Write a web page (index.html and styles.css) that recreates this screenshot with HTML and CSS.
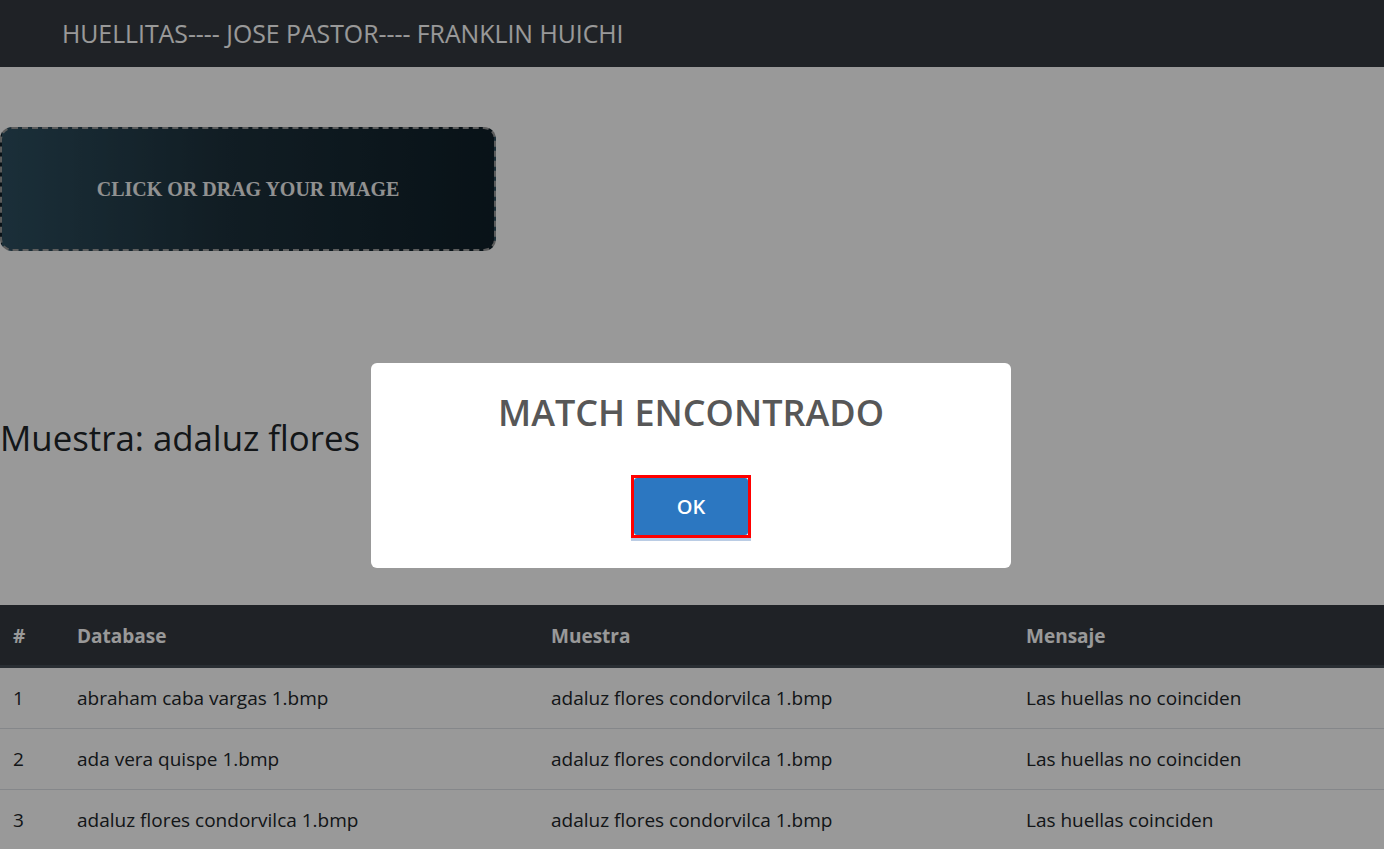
FILE: index.html
```html
<!DOCTYPE html>
<html lang="es">
<head>
<meta charset="utf-8">
<title>Huellitas</title>
<link rel="stylesheet" href="styles.css">
</head>
<body>
<nav class="navbar">
  <span class="brand">HUELLITAS---- JOSE PASTOR---- FRANKLIN HUICHI</span>
</nav>
<main class="content">
  <div class="dropzone">
    <span class="dropzone-text">CLICK OR DRAG YOUR IMAGE</span>
  </div>
  <h3 class="sample">Muestra: adaluz flores</h3>
  <table class="results">
    <thead>
      <tr>
        <th class="c-num">#</th>
        <th class="c-db">Database</th>
        <th class="c-sample">Muestra</th>
        <th class="c-msg">Mensaje</th>
      </tr>
    </thead>
    <tbody>
      <tr><td>1</td><td>abraham caba vargas 1.bmp</td><td>adaluz flores condorvilca 1.bmp</td><td>Las huellas no coinciden</td></tr>
      <tr><td>2</td><td>ada vera quispe 1.bmp</td><td>adaluz flores condorvilca 1.bmp</td><td>Las huellas no coinciden</td></tr>
      <tr><td>3</td><td>adaluz flores condorvilca 1.bmp</td><td>adaluz flores condorvilca 1.bmp</td><td>Las huellas coinciden</td></tr>
    </tbody>
  </table>
</main>
<div class="overlay">
  <div class="alert">
    <h2 class="alert-title">MATCH ENCONTRADO</h2>
    <div class="alert-actions">
      <span class="focus-ring"><button class="alert-ok">OK</button></span>
    </div>
  </div>
</div>
</body>
</html>
```

FILE: styles.css
```css
* { box-sizing: border-box; }
html, body { margin: 0; padding: 0; }
body {
  background: #fff;
  color: #212529;
  font-family: "Open Sans", "Noto Sans", sans-serif;
  font-size: 20px;
  line-height: 1.5;
  height: 849px;
  overflow: hidden;
}
.navbar {
  height: 67px;
  background: #343a40;
  display: flex;
  align-items: center;
  padding-left: 62px;
}
.brand {
  color: #fff;
  font-size: 24.8px;
}
.content {
  padding-top: 60px;
}
.dropzone {
  width: 496px;
  height: 124px;
  border: 2px dashed #9a9a9a;
  border-radius: 12px;
  background: linear-gradient(90deg, #2d4f60 0%, #1d313c 45%, #0f1f28 100%);
  display: flex;
  align-items: center;
  justify-content: center;
}
.dropzone-text {
  font-family: "Liberation Serif", "DejaVu Serif", serif;
  font-weight: bold;
  font-size: 20px;
  color: #f2f2f2;
}
.sample {
  margin: 166px 0 0 0;
  font-size: 34.8px;
  font-weight: 400;
  line-height: 1.2;
  height: 42px;
}
.results {
  margin-top: 146px;
  width: 100%;
  border-collapse: collapse;
}
.results th, .results td {
  text-align: left;
  padding: 15px 13px;
  line-height: 30px;
  vertical-align: top;
}
.results thead th {
  background: #343a40;
  color: #fff;
  font-weight: 700;
  border-bottom: 3px solid #454d55;
  font-size: 19px;
  padding-top: 16px;
  padding-bottom: 14px;
}
.results td {
  border-top: 1px solid #dee2e6;
  font-size: 19px;
}
.c-num { width: 64px; }
.c-db { width: 474px; }
.c-sample { width: 475px; }
.overlay {
  position: fixed;
  inset: 0;
  background: rgba(0, 0, 0, 0.4);
}
.alert {
  position: absolute;
  left: 371px;
  top: 363px;
  width: 640px;
  height: 205px;
  background: #fff;
  border-radius: 6px;
  text-align: center;
  padding-top: 24px;
}
.alert-title {
  margin: 0;
  color: #575757;
  font-size: 36px;
  font-weight: 600;
  line-height: 52px;
}
.alert-actions {
  margin-top: 36px;
  display: flex;
  justify-content: center;
}
.focus-ring {
  display: inline-flex;
  border: 3px solid #ff0000;
  box-shadow: 0 3px 0 0 rgba(140, 170, 210, 0.6);
}
.alert-ok {
  width: 114px;
  height: 57px;
  background: #2c77c1;
  color: #fff;
  border: none;
  border-radius: 3px;
  font-family: inherit;
  font-size: 20px;
  font-weight: 600;
  padding: 0;
  margin: 0;
}
```
